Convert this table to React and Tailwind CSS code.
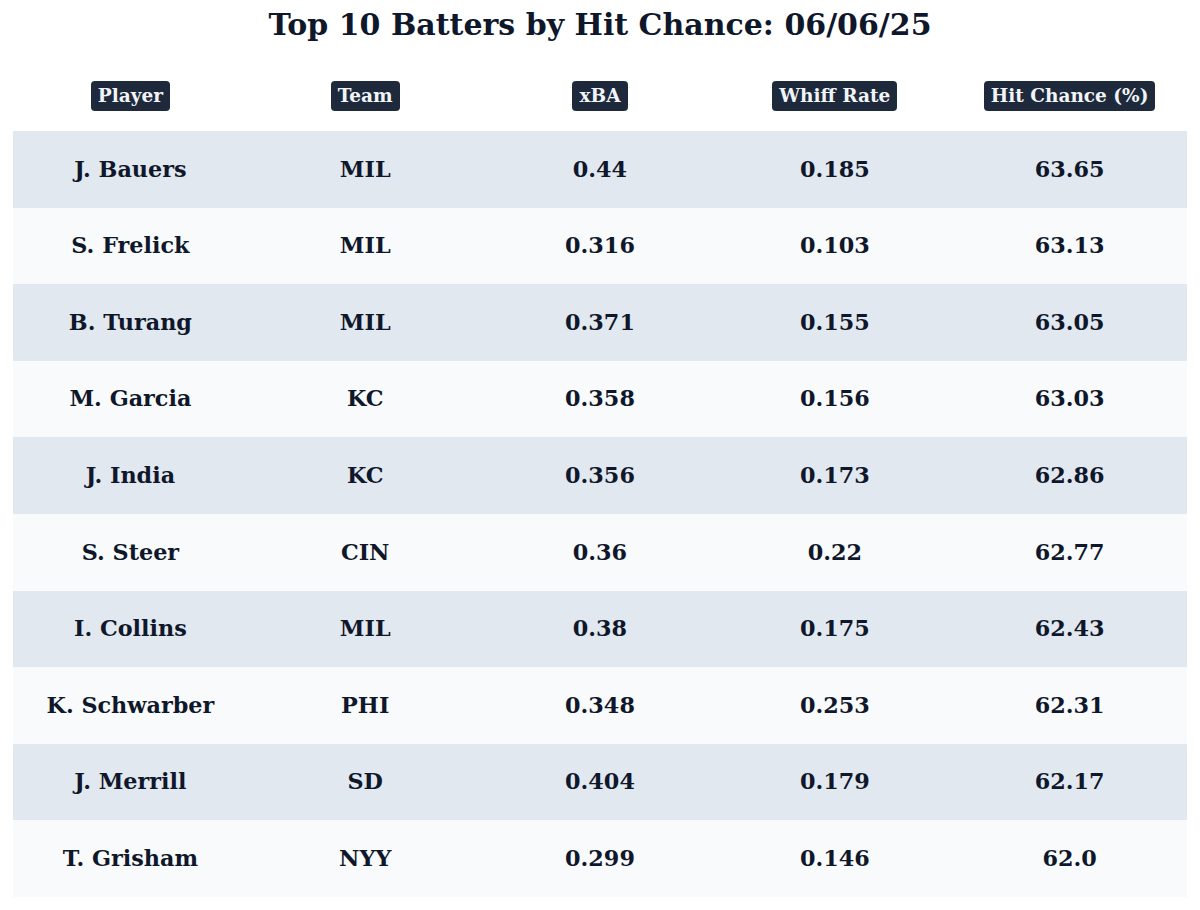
const rows = [
  ['J. Bauers', 'MIL', '0.44', '0.185', '63.65'],
  ['S. Frelick', 'MIL', '0.316', '0.103', '63.13'],
  ['B. Turang', 'MIL', '0.371', '0.155', '63.05'],
  ['M. Garcia', 'KC', '0.358', '0.156', '63.03'],
  ['J. India', 'KC', '0.356', '0.173', '62.86'],
  ['S. Steer', 'CIN', '0.36', '0.22', '62.77'],
  ['I. Collins', 'MIL', '0.38', '0.175', '62.43'],
  ['K. Schwarber', 'PHI', '0.348', '0.253', '62.31'],
  ['J. Merrill', 'SD', '0.404', '0.179', '62.17'],
  ['T. Grisham', 'NYY', '0.299', '0.146', '62.0'],
];

const columns = ['Player', 'Team', 'xBA', 'Whiff Rate', 'Hit Chance (%)'];

export default function App() {
  return (
    <div className="w-[1200px] h-[910px] bg-white text-[#0f172a] font-['DejaVu_Serif',serif] font-bold">
      {/* Title */}
      <div className="h-[52px] flex items-end justify-center text-[30px] leading-none pb-[12px]">
        Top 10 Batters by Hit Chance: 06/06/25
      </div>

      {/* Column headers */}
      <div className="mx-[13px] h-[79px] grid grid-cols-5 items-end pb-[20px]">
        {columns.map((c) => (
          <div key={c} className="flex justify-center">
            <span className="bg-[#1e293b] text-[#f1f5f9] text-[18.5px] leading-none px-[7px] py-[6px] rounded-[4px]">
              {c}
            </span>
          </div>
        ))}
      </div>

      {/* Rows */}
      <div className="mx-[13px]">
        {rows.map((r, i) => (
          <div
            key={r[0]}
            className={`h-[76.6px] grid grid-cols-5 items-center text-[22.3px] ${
              i % 2 === 0 ? 'bg-[#e2e8f0]' : 'bg-[#f8fafc]'
            }`}
          >
            {r.map((cell, j) => (
              <div key={j} className="text-center">
                {cell}
              </div>
            ))}
          </div>
        ))}
      </div>
    </div>
  );
}
